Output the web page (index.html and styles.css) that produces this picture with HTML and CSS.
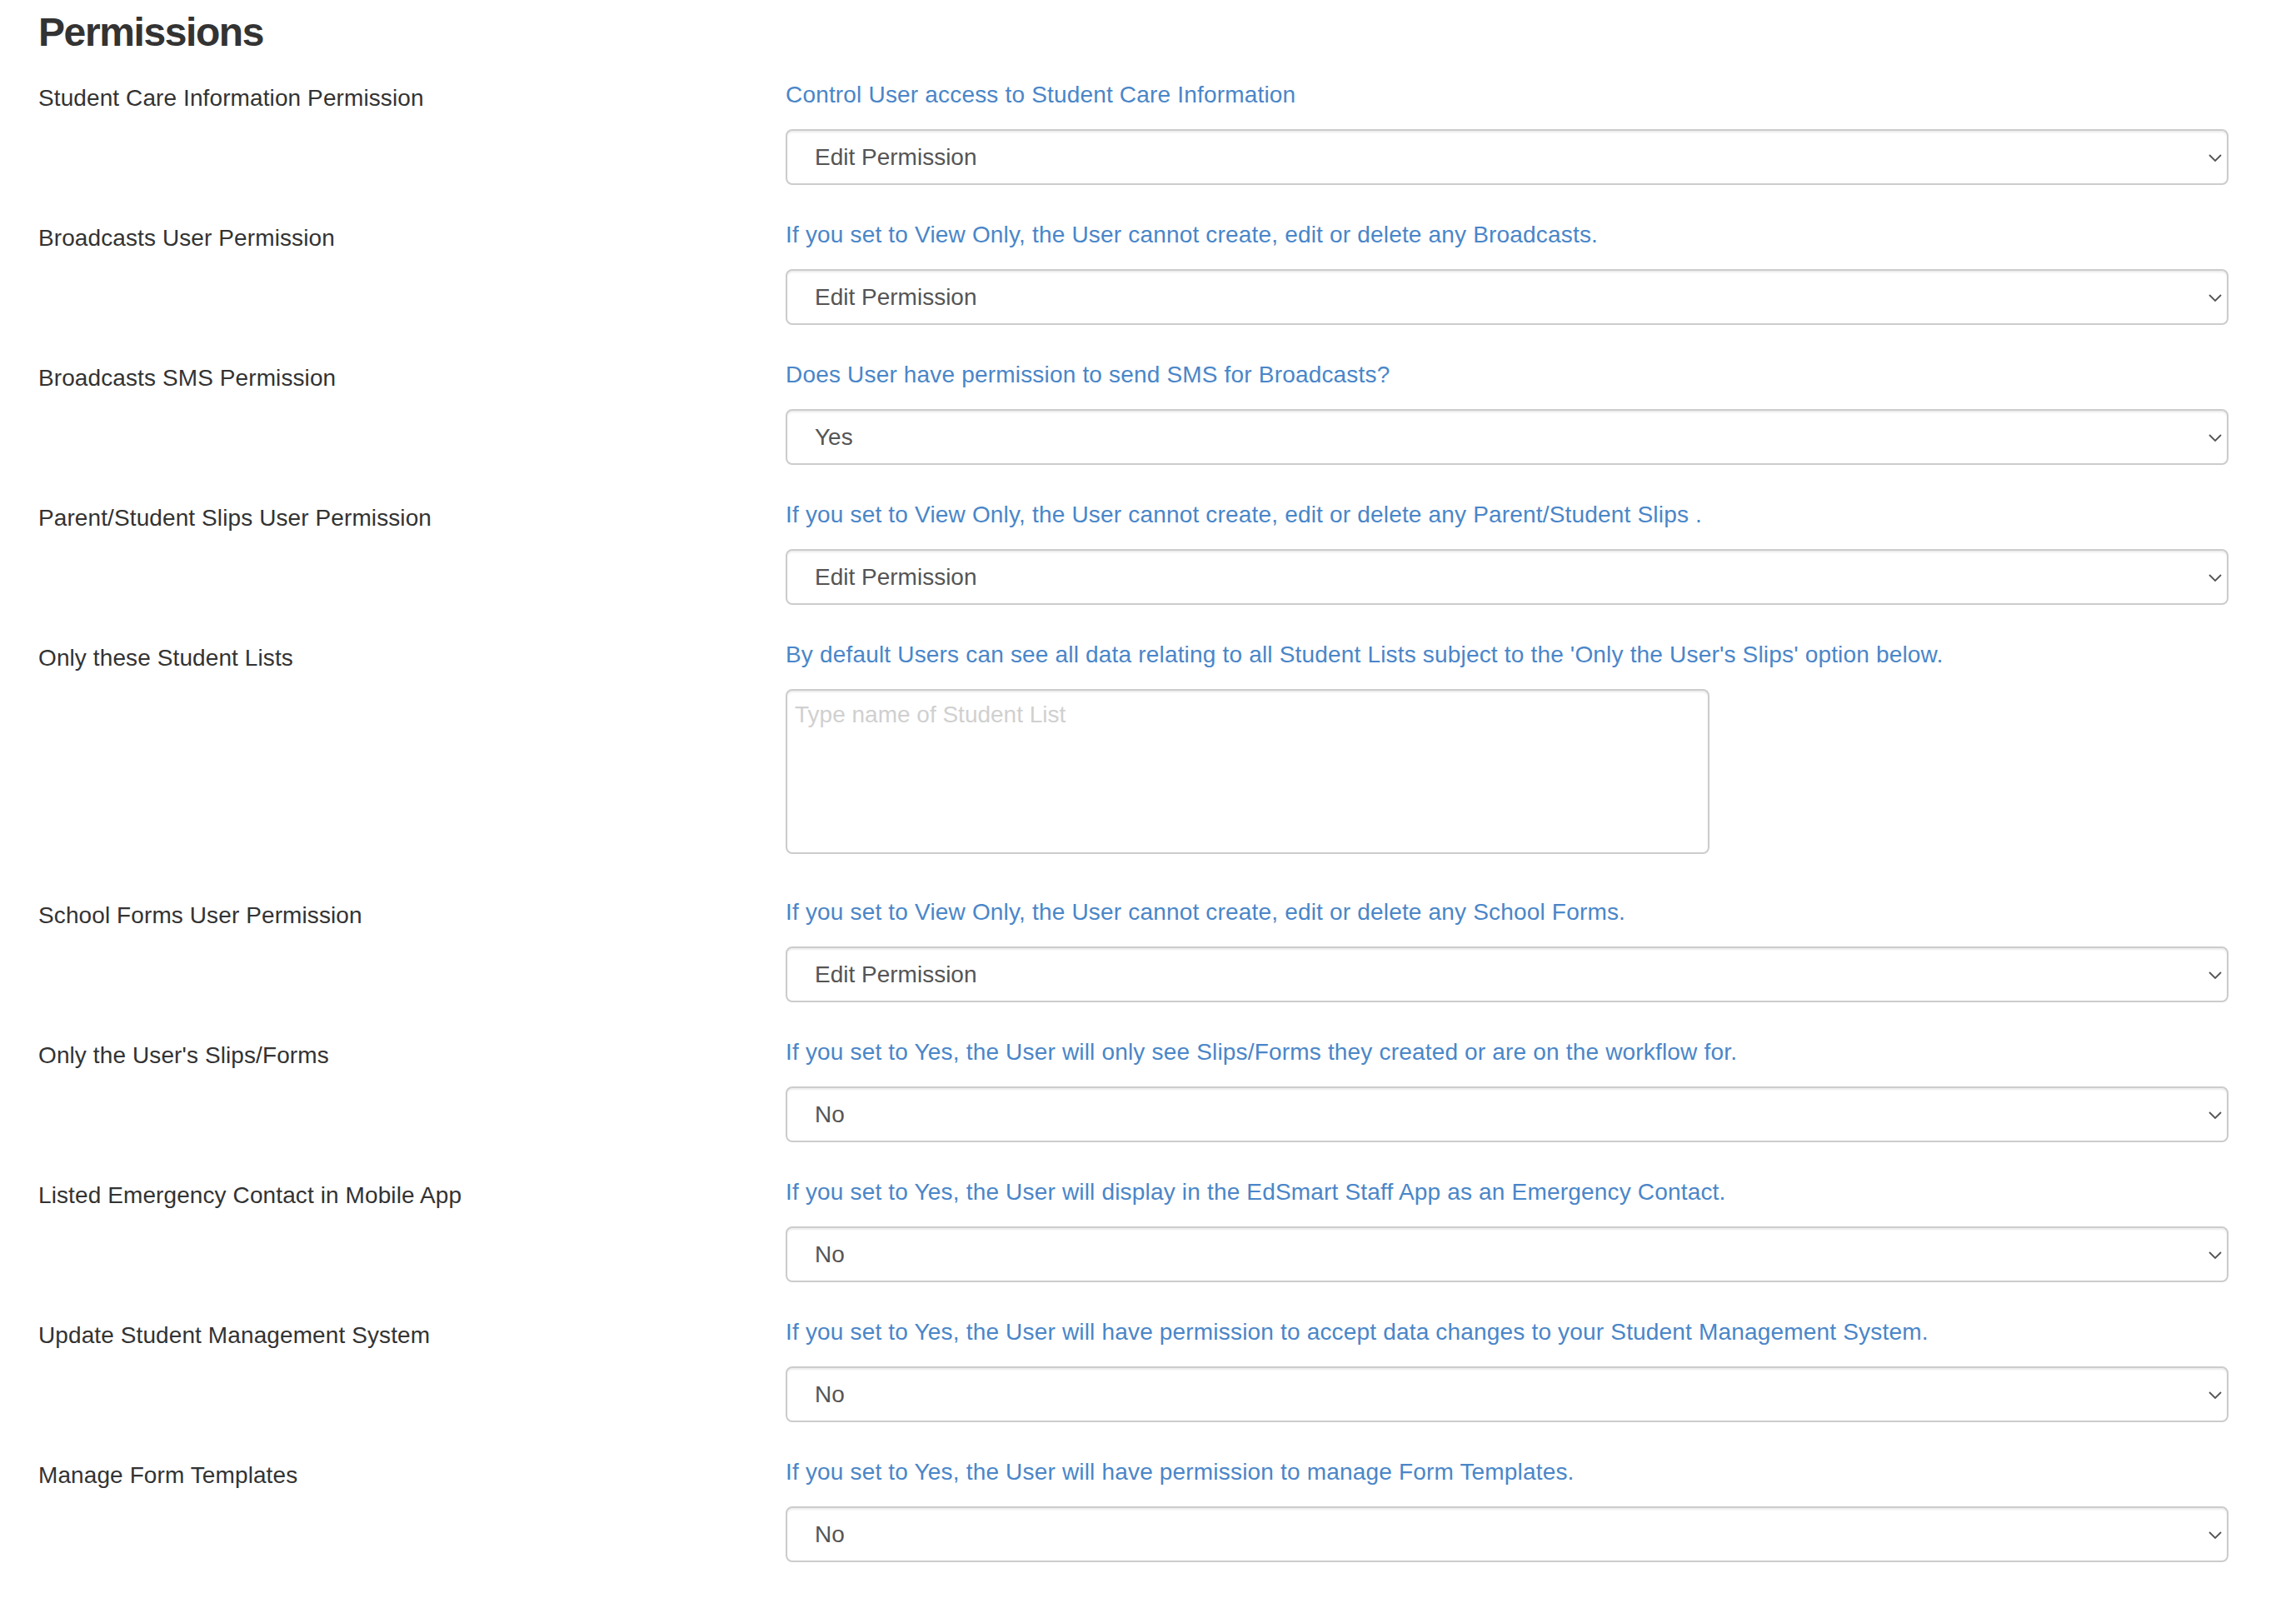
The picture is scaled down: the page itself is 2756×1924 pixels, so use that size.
FILE: index.html
```html
<!DOCTYPE html>
<html lang="en">
<head>
<meta charset="utf-8">
<title>Permissions</title>
<link rel="stylesheet" href="styles.css">
</head>
<body>
<div class="page">
  <h3 class="title">Permissions</h3>
  <form class="form">
    <div class="row">
      <label class="label">Student Care Information Permission</label>
      <div class="field">
        <p class="help">Control User access to Student Care Information</p>
        <div class="select-wrap">
          <select class="control"><option>Edit Permission</option><option>View Only</option></select>
          <svg class="chev" width="16" height="9" viewBox="0 0 16 9"><polyline points="1,1 8,8 15,1" fill="none" stroke="#555" stroke-width="1.8"/></svg>
        </div>
      </div>
    </div>
    <div class="row">
      <label class="label">Broadcasts User Permission</label>
      <div class="field">
        <p class="help">If you set to View Only, the User cannot create, edit or delete any Broadcasts.</p>
        <div class="select-wrap">
          <select class="control"><option>Edit Permission</option><option>View Only</option></select>
          <svg class="chev" width="16" height="9" viewBox="0 0 16 9"><polyline points="1,1 8,8 15,1" fill="none" stroke="#555" stroke-width="1.8"/></svg>
        </div>
      </div>
    </div>
    <div class="row">
      <label class="label">Broadcasts SMS Permission</label>
      <div class="field">
        <p class="help">Does User have permission to send SMS for Broadcasts?</p>
        <div class="select-wrap">
          <select class="control"><option>Yes</option><option>No</option></select>
          <svg class="chev" width="16" height="9" viewBox="0 0 16 9"><polyline points="1,1 8,8 15,1" fill="none" stroke="#555" stroke-width="1.8"/></svg>
        </div>
      </div>
    </div>
    <div class="row">
      <label class="label">Parent/Student Slips User Permission</label>
      <div class="field">
        <p class="help">If you set to View Only, the User cannot create, edit or delete any Parent/Student Slips .</p>
        <div class="select-wrap">
          <select class="control"><option>Edit Permission</option><option>View Only</option></select>
          <svg class="chev" width="16" height="9" viewBox="0 0 16 9"><polyline points="1,1 8,8 15,1" fill="none" stroke="#555" stroke-width="1.8"/></svg>
        </div>
      </div>
    </div>
    <div class="row">
      <label class="label">Only these Student Lists</label>
      <div class="field">
        <p class="help">By default Users can see all data relating to all Student Lists subject to the 'Only the User's Slips' option below.</p>
        <textarea class="area" placeholder="Type name of Student List"></textarea>
      </div>
    </div>
    <div class="row">
      <label class="label">School Forms User Permission</label>
      <div class="field">
        <p class="help">If you set to View Only, the User cannot create, edit or delete any School Forms.</p>
        <div class="select-wrap">
          <select class="control"><option>Edit Permission</option><option>View Only</option></select>
          <svg class="chev" width="16" height="9" viewBox="0 0 16 9"><polyline points="1,1 8,8 15,1" fill="none" stroke="#555" stroke-width="1.8"/></svg>
        </div>
      </div>
    </div>
    <div class="row">
      <label class="label">Only the User's Slips/Forms</label>
      <div class="field">
        <p class="help">If you set to Yes, the User will only see Slips/Forms they created or are on the workflow for.</p>
        <div class="select-wrap">
          <select class="control"><option>No</option><option>Yes</option></select>
          <svg class="chev" width="16" height="9" viewBox="0 0 16 9"><polyline points="1,1 8,8 15,1" fill="none" stroke="#555" stroke-width="1.8"/></svg>
        </div>
      </div>
    </div>
    <div class="row">
      <label class="label">Listed Emergency Contact in Mobile App</label>
      <div class="field">
        <p class="help">If you set to Yes, the User will display in the EdSmart Staff App as an Emergency Contact.</p>
        <div class="select-wrap">
          <select class="control"><option>No</option><option>Yes</option></select>
          <svg class="chev" width="16" height="9" viewBox="0 0 16 9"><polyline points="1,1 8,8 15,1" fill="none" stroke="#555" stroke-width="1.8"/></svg>
        </div>
      </div>
    </div>
    <div class="row">
      <label class="label">Update Student Management System</label>
      <div class="field">
        <p class="help">If you set to Yes, the User will have permission to accept data changes to your Student Management System.</p>
        <div class="select-wrap">
          <select class="control"><option>No</option><option>Yes</option></select>
          <svg class="chev" width="16" height="9" viewBox="0 0 16 9"><polyline points="1,1 8,8 15,1" fill="none" stroke="#555" stroke-width="1.8"/></svg>
        </div>
      </div>
    </div>
    <div class="row">
      <label class="label">Manage Form Templates</label>
      <div class="field">
        <p class="help">If you set to Yes, the User will have permission to manage Form Templates.</p>
        <div class="select-wrap">
          <select class="control"><option>No</option><option>Yes</option></select>
          <svg class="chev" width="16" height="9" viewBox="0 0 16 9"><polyline points="1,1 8,8 15,1" fill="none" stroke="#555" stroke-width="1.8"/></svg>
        </div>
      </div>
    </div>
  </form>
</div>
</body>
</html>
```
FILE: styles.css
```css
* { box-sizing: border-box; }
html, body { margin: 0; padding: 0; background: #fff; }
body {
  font-family: "Liberation Sans", Arial, Helvetica, sans-serif;
  font-size: 28px;
  line-height: 40px;
  color: #333;
}
.page {
  padding: 12px 81px 0 46px;
}
.title {
  margin: 0;
  font-size: 48px;
  line-height: 53px;
  font-weight: bold;
  letter-spacing: -1.4px;
  color: #333;
}
.form {
  margin: 29px 0 0;
}
.row {
  display: grid;
  grid-template-columns: 897px 1fr;
  margin-bottom: 40px;
}
.label {
  padding-top: 4px;
  font-weight: normal;
  color: #333;
  letter-spacing: 0.1px;
}
.field {
  display: flex;
  flex-direction: column;
}
.help {
  margin: 0 0 21px;
  color: #4a86c8;
  white-space: nowrap;
  letter-spacing: 0.18px;
}
.select-wrap {
  position: relative;
}
.control {
  display: block;
  width: 100%;
  height: 67px;
  margin: 0;
  padding: 0 40px 0 33px;
  font-family: inherit;
  font-size: 28px;
  color: #555;
  background: #fff;
  border: 2px solid #ccc;
  border-radius: 8px;
  box-shadow: inset 0 2px 2px rgba(0, 0, 0, 0.075);
  -webkit-appearance: none;
  appearance: none;
  outline: none;
}
.chev {
  position: absolute;
  right: 8px;
  top: 50%;
  margin-top: -4px;
  pointer-events: none;
}
.area {
  display: block;
  width: 1109px;
  height: 198px;
  margin: 0 0 10px;
  padding: 9px;
  font-family: inherit;
  font-size: 28px;
  line-height: 40px;
  color: #555;
  background: #fff;
  border: 2px solid #ccc;
  border-radius: 8px;
  box-shadow: inset 0 2px 2px rgba(0, 0, 0, 0.075);
  resize: none;
  outline: none;
}
.area::placeholder {
  color: #d0d0d0;
}
```
